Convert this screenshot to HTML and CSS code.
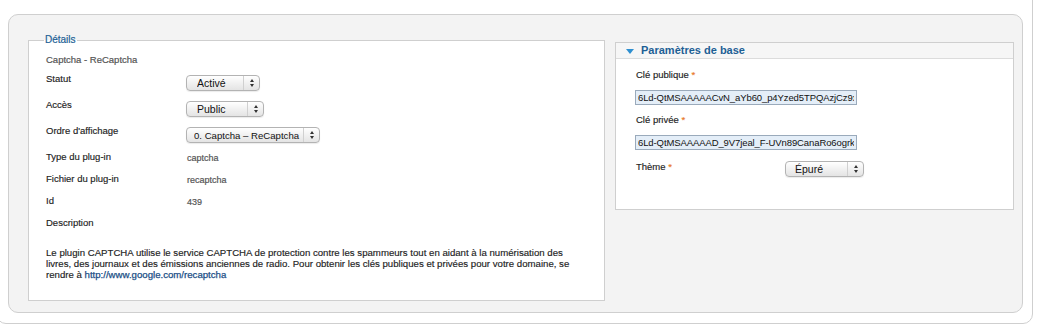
FILE: index.html
```html
<!DOCTYPE html>
<html lang="fr">
<head>
  <meta charset="UTF-8" />
  <title>Plug-in : Captcha - ReCaptcha</title>
  <link rel="stylesheet" href="styles.css">
</head>
<body>
  <div class="outer">
    <div class="panel">
      <!-- Details -->
      <fieldset class="details">
        <legend>Détails</legend>
        <div class="plugin-name">Captcha - ReCaptcha</div>

        <div class="form-row">
          <label>Statut</label>
          <div class="select w-status"><span>Activé</span><i class="arrows"></i></div>
        </div>
        <div class="form-row">
          <label>Accès</label>
          <div class="select w-access"><span>Public</span><i class="arrows"></i></div>
        </div>
        <div class="form-row">
          <label>Ordre d'affichage</label>
          <div class="select w-order"><span>0. Captcha – ReCaptcha</span><i class="arrows"></i></div>
        </div>

        <div class="info-row"><label>Type du plug-in</label><span class="value">captcha</span></div>
        <div class="info-row"><label>Fichier du plug-in</label><span class="value">recaptcha</span></div>
        <div class="info-row"><label>Id</label><span class="value">439</span></div>
        <div class="info-row"><label>Description</label></div>

        <p class="desc">Le plugin CAPTCHA utilise le service CAPTCHA de protection contre les spammeurs tout en aidant à la numérisation des livres, des journaux et des émissions anciennes de radio. Pour obtenir les clés publiques et privées pour votre domaine, se rendre à <a href="#">http://www.google.com/recaptcha</a></p>
      </fieldset>

      <!-- Basic parameters -->
      <div class="params">
        <div class="params-head"><span class="tri"></span>Paramètres de base</div>
        <div class="params-body">
          <label class="field-label">Clé publique <em>*</em></label>
          <input class="key" type="text" value="6Ld-QtMSAAAAACvN_aYb60_p4Yzed5TPQAzjCz9x" />
          <label class="field-label">Clé privée <em>*</em></label>
          <input class="key" type="text" value="6Ld-QtMSAAAAAD_9V7jeal_F-UVn89CanaRo6ogrk" />
          <div class="theme-row">
            <label>Thème <em>*</em></label>
            <div class="select w-theme"><span>Épuré</span><i class="arrows"></i></div>
          </div>
        </div>
      </div>
    </div>
  </div>
</body>
</html>
```

FILE: styles.css
```css
* {
  box-sizing: border-box;
}
body {
  margin: 0;
  background: #fff;
  font-family: "Liberation Sans", Arial, sans-serif;
  font-size: 9.5px;
  color: #222;
  overflow: hidden;
}
.outer {
  margin: -4px 0 0 -4px;
  width: 1037px;
  height: 328px;
  border: 1px solid #cfcfcf;
  border-radius: 0 0 10px 10px;
  padding: 17px 0 0 11px;
}
.panel {
  width: 1015px;
  height: 299px;
  background: #f3f3f3;
  border: 1px solid #cfcfcf;
  border-radius: 10px;
  padding: 19px 0 0 19px;
  display: flex;
  align-items: flex-start;
  gap: 10px;
}

/* left fieldset */
.details {
  margin: 0;
  width: 577px;
  border: 1px solid #cfcfcf;
  background: #fff;
  padding: 0 17px 20px 17px;
  min-width: 0;
}
.details legend {
  color: #1d5f95;
  font-size: 10px;
  line-height: 12px;
  padding: 0 1px;
  margin-left: -2px;
  -webkit-text-stroke: 0.2px #1d5f95;
}
.plugin-name {
  color: #555;
  line-height: 12px;
  margin-top: 8px;
  margin-bottom: 7px;
  -webkit-text-stroke: 0.2px #555;
}
.form-row {
  display: flex;
  height: 26px;
}
.form-row label,
.info-row label {
  width: 140px;
  line-height: 12px;
  flex-shrink: 0;
  -webkit-text-stroke: 0.15px #222;
}
.form-row .select {
  margin-top: 2px;
}
.info-row {
  display: flex;
  height: 22px;
  line-height: 12px;
}
.info-row .value {
  color: #555;
  font-size: 9px;
  padding-top: 1px;
  padding-left: 1px;
  -webkit-text-stroke: 0.2px #555;
}
.desc {
  margin: 8px 0 0 0;
  line-height: 11px;
  color: #222;
  font-size: 9.65px;
  -webkit-text-stroke: 0.15px #222;
}
.desc a {
  color: #1a4e86;
  text-decoration: none;
  -webkit-text-stroke: 0.25px #1a4e86;
}

/* fake mac selects */
.select {
  display: flex;
  align-items: center;
  height: 16px;
  border: 1px solid #b3b3b3;
  border-radius: 4px;
  background: linear-gradient(#ffffff, #f1f1f1 50%, #e4e4e4);
  box-shadow: 0 1px 1px rgba(0, 0, 0, 0.08);
  font-family: "Liberation Sans", Arial, sans-serif;
  font-size: 10.5px;
  color: #111;
  padding-left: 10px;
}
.select span {
  flex: 1;
  white-space: nowrap;
  overflow: hidden;
}
.select .arrows {
  width: 16px;
  height: 100%;
  border-left: 1px solid #d0d0d0;
  position: relative;
  flex-shrink: 0;
}
.select .arrows::before,
.select .arrows::after {
  content: "";
  position: absolute;
  left: 6px;
  border-left: 2px solid transparent;
  border-right: 2px solid transparent;
}
.select .arrows::before {
  top: 3px;
  border-bottom: 3px solid #333;
}
.select .arrows::after {
  top: 8px;
  border-top: 3px solid #333;
}
.w-status { width: 74px; }
.w-access { width: 78px; }
.w-order { width: 134px; padding-left: 7px; font-size: 9.6px; }
.w-theme { width: 79px; padding-left: 9px; }

/* right panel */
.params {
  margin-top: 8px;
  width: 399px;
  height: 168px;
  border: 1px solid #cfcfcf;
  background: #fff;
}
.params-head {
  height: 16px;
  background: #f6f6f6;
  border-bottom: 1px solid #dcdcdc;
  color: #1d5f95;
  font-weight: bold;
  font-size: 11px;
  line-height: 15px;
  padding-left: 10px;
  display: flex;
  align-items: center;
}
.tri {
  width: 0;
  height: 0;
  border-left: 4px solid transparent;
  border-right: 4px solid transparent;
  border-top: 5px solid #2e8fd0;
  margin-right: 7px;
  margin-top: 1px;
}
.params-body {
  padding: 10px 19px 0 19px;
}
.field-label {
  display: block;
  line-height: 12px;
  margin-bottom: 9px;
  padding-left: 1px;
  -webkit-text-stroke: 0.15px #222;
}
em {
  font-style: normal;
  color: #e8741c;
  -webkit-text-stroke: 0.15px #e8741c;
}
.key {
  display: block;
  width: 222px;
  height: 15px;
  margin: 0 0 9px 0;
  padding: 0 2px;
  border: 1px solid #9aaabb;
  background: #e4eef8;
  font-family: "Liberation Sans", Arial, sans-serif;
  font-size: 9.5px;
  letter-spacing: -0.1px;
  line-height: 13px;
  color: #111;
  outline: none;
}
.theme-row {
  display: flex;
  margin-top: 11px;
}
.theme-row label {
  width: 150px;
  line-height: 12px;
  padding-left: 1px;
  -webkit-text-stroke: 0.15px #222;
}
```
